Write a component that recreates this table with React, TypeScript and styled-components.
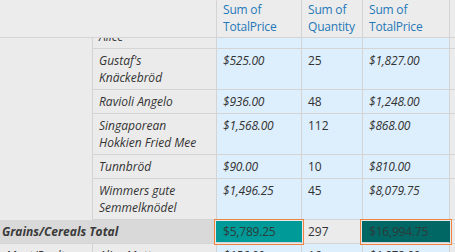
import React from "react";
import styled, { createGlobalStyle, css } from "styled-components";

const Global = createGlobalStyle`
  html, body { margin: 0; padding: 0; background: #ebebeb; }
  body { font-family: "Open Sans", "Noto Sans", sans-serif; }
`;

const COLS = "93px 124px 85px 61px 87px 1fr";
const LINE = "#d4d4d4";

const Frame = styled.div`
  width: 455px;
  height: 252px;
  overflow: hidden;
  background: #ebebeb;
  font-size: 12px;
  color: #333;
  display: flex;
  flex-direction: column;
`;

const HeaderRow = styled.div`
  display: grid;
  grid-template-columns: ${COLS};
  height: 38px;
  flex: none;
  background: #ececec;
  border-bottom: 1px solid ${LINE};
  box-sizing: border-box;
`;

const Corner = styled.div`
  grid-column: span 2;
  border-right: 1px solid ${LINE};
`;

const HeadCell = styled.div`
  padding: 1px 6px 0;
  line-height: 17px;
  color: #1f78b8;
  border-right: 1px solid ${LINE};
  white-space: nowrap;
  letter-spacing: -0.2px;
`;

const Viewport = styled.div`
  flex: 1;
  overflow: hidden;
`;

const BodyGrid = styled.div`
  display: grid;
  grid-template-columns: ${COLS};
  margin-top: -54px;
`;

const GroupCell = styled.div<{ $rows: number }>`
  grid-row: span ${(p) => p.$rows};
  border-right: 1px solid ${LINE};
  padding: 3px 6px;
  line-height: 17px;
  font-style: italic;
`;

const Cell = styled.div<{ $kind?: "name" | "price" | "qty" | "pad" }>`
  border-right: 1px solid ${LINE};
  border-bottom: 1px solid ${LINE};
  padding: 3px 6px;
  line-height: 17px;
  white-space: nowrap;
  ${(p) =>
    p.$kind === "name"
      ? css`
          background: #ebebeb;
          font-style: italic;
        `
      : p.$kind === "pad"
      ? css`
          background: #ebebeb;
          border-right: none;
        `
      : css`
          background: #ddeefd;
          ${p.$kind === "price" ? "font-style: italic; letter-spacing: -0.2px;" : ""}
        `}
`;

const NameLine = styled.span`
  display: block;
`;

const TotalLabel = styled.div`
  grid-column: span 2;
  background: #d9d9d9;
  border-bottom: 1px solid ${LINE};
  border-right: 1px solid ${LINE};
  padding: 3px 2px;
  line-height: 17px;
  font-weight: bold;
  font-style: italic;
  color: #3a3a3a;
`;

const TotalCell = styled.div<{ $fill?: string }>`
  position: relative;
  z-index: ${(p) => (p.$fill ? 1 : 0)};
  border-right: 1px solid ${(p) => (p.$fill ? "transparent" : LINE)};
  border-bottom: 1px solid ${LINE};
  padding: 3px 6px;
  line-height: 17px;
  background: ${(p) => p.$fill ?? "#ebebeb"};
  color: #333;
  white-space: nowrap;
  ${(p) =>
    p.$fill &&
    css`
      margin: 1px 0 1px -1px;
      padding: 2px 7px 2px 7px;
      box-shadow: 0 0 0 1px #e9e9e9, 0 0 0 2px #f0833f;
      color: #2c3b3b;
      letter-spacing: -0.2px;
    `}
`;

type Row = { name: string[]; a: string; q: string; b: string };

const rows: Row[] = [
  { name: ["Filo Mix"], a: "$189.00", q: "27", b: "$1,155.00" },
  { name: ["Gnocchi di nonna", "Alice"], a: "$1,824.00", q: "48", b: "$5,548.00" },
  { name: ["Gustaf's", "Knäckebröd"], a: "$525.00", q: "25", b: "$1,827.00" },
  { name: ["Ravioli Angelo"], a: "$936.00", q: "48", b: "$1,248.00" },
  { name: ["Singaporean", "Hokkien Fried Mee"], a: "$1,568.00", q: "112", b: "$868.00" },
  { name: ["Tunnbröd"], a: "$90.00", q: "10", b: "$810.00" },
  { name: ["Wimmers gute", "Semmelknödel"], a: "$1,496.25", q: "45", b: "$8,079.75" },
];

export default function App() {
  return (
    <Frame>
      <Global />
      <HeaderRow>
        <Corner />
        <HeadCell>
          Sum of
          <br />
          TotalPrice
        </HeadCell>
        <HeadCell>
          Sum of
          <br />
          Quantity
        </HeadCell>
        <HeadCell>
          Sum of
          <br />
          TotalPrice
        </HeadCell>
        <div />
      </HeaderRow>
      <Viewport>
        <BodyGrid>
          <GroupCell $rows={rows.length}>Grains/Cereals</GroupCell>
          {rows.map((r) => (
            <React.Fragment key={r.name.join(" ")}>
              <Cell $kind="name">
                {r.name.map((l) => (
                  <NameLine key={l}>{l}</NameLine>
                ))}
              </Cell>
              <Cell $kind="price">{r.a}</Cell>
              <Cell $kind="qty">{r.q}</Cell>
              <Cell $kind="price">{r.b}</Cell>
              <Cell $kind="pad" />
            </React.Fragment>
          ))}
          <TotalLabel>Grains/Cereals Total</TotalLabel>
          <TotalCell $fill="#009b98">$5,789.25</TotalCell>
          <TotalCell>297</TotalCell>
          <TotalCell $fill="#006764">$16,994.75</TotalCell>
          <TotalCell />
          <GroupCell $rows={1}>Meat/Poultry</GroupCell>
          <Cell $kind="name">
            <NameLine>Alice Mutton</NameLine>
          </Cell>
          <Cell $kind="price">$156.00</Cell>
          <Cell $kind="qty">16</Cell>
          <Cell $kind="price">$1,872.00</Cell>
          <Cell $kind="pad" />
        </BodyGrid>
      </Viewport>
    </Frame>
  );
}
